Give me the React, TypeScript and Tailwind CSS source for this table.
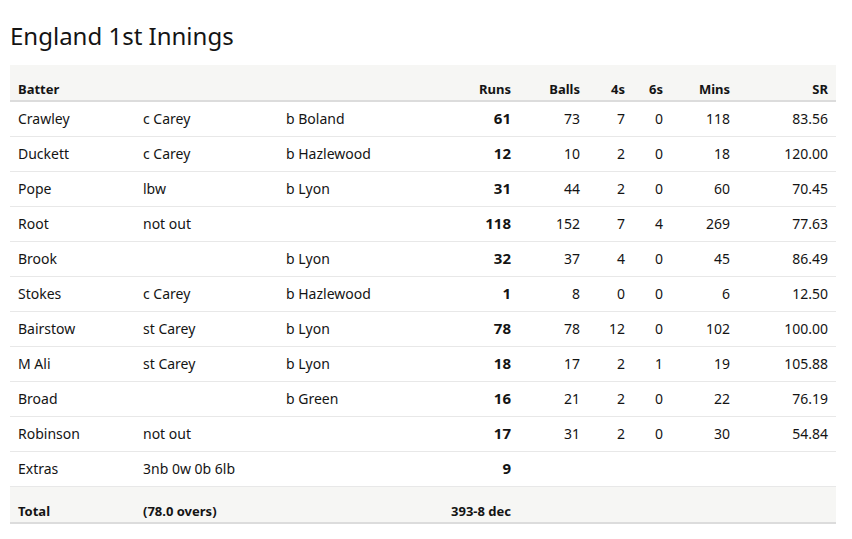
import React from 'react';

type Row = {
  name: string;
  how: string;
  bowler: string;
  runs: string;
  balls: string;
  fours: string;
  sixes: string;
  mins: string;
  sr: string;
};

const rows: Row[] = [
  { name: 'Crawley', how: 'c Carey', bowler: 'b Boland', runs: '61', balls: '73', fours: '7', sixes: '0', mins: '118', sr: '83.56' },
  { name: 'Duckett', how: 'c Carey', bowler: 'b Hazlewood', runs: '12', balls: '10', fours: '2', sixes: '0', mins: '18', sr: '120.00' },
  { name: 'Pope', how: 'lbw', bowler: 'b Lyon', runs: '31', balls: '44', fours: '2', sixes: '0', mins: '60', sr: '70.45' },
  { name: 'Root', how: 'not out', bowler: '', runs: '118', balls: '152', fours: '7', sixes: '4', mins: '269', sr: '77.63' },
  { name: 'Brook', how: '', bowler: 'b Lyon', runs: '32', balls: '37', fours: '4', sixes: '0', mins: '45', sr: '86.49' },
  { name: 'Stokes', how: 'c Carey', bowler: 'b Hazlewood', runs: '1', balls: '8', fours: '0', sixes: '0', mins: '6', sr: '12.50' },
  { name: 'Bairstow', how: 'st Carey', bowler: 'b Lyon', runs: '78', balls: '78', fours: '12', sixes: '0', mins: '102', sr: '100.00' },
  { name: 'M Ali', how: 'st Carey', bowler: 'b Lyon', runs: '18', balls: '17', fours: '2', sixes: '1', mins: '19', sr: '105.88' },
  { name: 'Broad', how: '', bowler: 'b Green', runs: '16', balls: '21', fours: '2', sixes: '0', mins: '22', sr: '76.19' },
  { name: 'Robinson', how: 'not out', bowler: '', runs: '17', balls: '31', fours: '2', sixes: '0', mins: '30', sr: '54.84' },
];

const cols = 'grid grid-cols-[125px_143px_162px_79px_69px_45px_38px_67px_98px]';

export default function App() {
  return (
    <div className="min-h-screen bg-white px-[10px] pt-[20px] text-[#141414] font-['Noto_Sans',sans-serif]">
      <h1 className="text-[24px] leading-[32px] mb-[13px]">England 1st Innings</h1>

      <div className="w-[826px] text-[14px]">
        {/* Header */}
        <div className={`${cols} h-[37px] items-end pb-[1px] bg-[#f6f6f4] border-b-2 border-[#dcdcdc] text-[13px] font-bold`}>
          <div className="px-2">Batter</div>
          <div />
          <div />
          <div className="px-2 text-right">Runs</div>
          <div className="px-2 text-right">Balls</div>
          <div className="px-2 text-right">4s</div>
          <div className="px-2 text-right">6s</div>
          <div className="px-2 text-right">Mins</div>
          <div className="px-2 text-right">SR</div>
        </div>

        {rows.map((r) => (
          <div key={r.name} className={`${cols} h-[35px] items-center pb-[2px] border-b border-[#e8e8e8]`}>
            <div className="px-2">{r.name}</div>
            <div className="px-2">{r.how}</div>
            <div className="px-2">{r.bowler}</div>
            <div className="px-2 text-right text-[15px] font-bold">{r.runs}</div>
            <div className="px-2 text-right">{r.balls}</div>
            <div className="px-2 text-right">{r.fours}</div>
            <div className="px-2 text-right">{r.sixes}</div>
            <div className="px-2 text-right">{r.mins}</div>
            <div className="px-2 text-right">{r.sr}</div>
          </div>
        ))}

        {/* Extras */}
        <div className={`${cols} h-[35px] items-center pb-[2px] border-b border-[#e8e8e8]`}>
          <div className="px-2">Extras</div>
          <div className="px-2">3nb 0w 0b 6lb</div>
          <div />
          <div className="px-2 text-right text-[15px] font-bold">9</div>
        </div>

        {/* Total */}
        <div className={`${cols} h-[37px] items-end pb-[1px] bg-[#f6f6f4] border-b-2 border-[#dcdcdc] text-[13px] font-bold`}>
          <div className="px-2">Total</div>
          <div className="px-2">(78.0 overs)</div>
          <div />
          <div className="px-2 text-right whitespace-nowrap">393-8 dec</div>
        </div>
      </div>
    </div>
  );
}
